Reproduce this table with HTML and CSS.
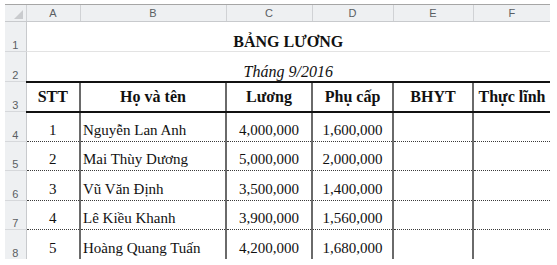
FILE: index.html
```html
<!DOCTYPE html>
<html lang="vi">
<head>
<meta charset="utf-8">
<title>Bảng lương</title>
<link rel="stylesheet" href="styles.css">
</head>
<body>
<table class="sheet">
  <colgroup>
    <col class="c-rh"><col class="c-a"><col class="c-b"><col class="c-c"><col class="c-d"><col class="c-e"><col class="c-f">
  </colgroup>
  <thead>
    <tr class="colhead">
      <th class="corner"><span class="tri"></span></th>
      <th>A</th><th>B</th><th>C</th><th>D</th><th>E</th><th>F</th>
    </tr>
  </thead>
  <tbody>
    <tr class="r r1">
      <th class="rh">1</th>
      <td colspan="6" class="title">BẢNG LƯƠNG</td>
    </tr>
    <tr class="r r2">
      <th class="rh">2</th>
      <td colspan="6" class="sub">Tháng 9/2016</td>
    </tr>
    <tr class="r r3 hdr">
      <th class="rh">3</th>
      <td class="ca">STT</td>
      <td class="cb">Họ và tên</td>
      <td>Lương</td>
      <td>Phụ cấp</td>
      <td>BHYT</td>
      <td>Thực lĩnh</td>
    </tr>
    <tr class="r data">
      <th class="rh">4</th>
      <td class="ca">1</td><td class="cb name">Nguyễn Lan Anh</td><td>4,000,000</td><td>1,600,000</td><td></td><td></td>
    </tr>
    <tr class="r data">
      <th class="rh">5</th>
      <td class="ca">2</td><td class="cb name">Mai Thùy Dương</td><td>5,000,000</td><td>2,000,000</td><td></td><td></td>
    </tr>
    <tr class="r data">
      <th class="rh">6</th>
      <td class="ca">3</td><td class="cb name">Vũ Văn Định</td><td>3,500,000</td><td>1,400,000</td><td></td><td></td>
    </tr>
    <tr class="r data">
      <th class="rh">7</th>
      <td class="ca">4</td><td class="cb name">Lê Kiều Khanh</td><td>3,900,000</td><td>1,560,000</td><td></td><td></td>
    </tr>
    <tr class="r data last">
      <th class="rh">8</th>
      <td class="ca">5</td><td class="cb name">Hoàng Quang Tuấn</td><td>4,200,000</td><td>1,680,000</td><td></td><td></td>
    </tr>
  </tbody>
</table>
</body>
</html>
```
FILE: styles.css
```css
html, body {
  margin: 0;
  padding: 0;
  background: #ffffff;
}
body {
  padding: 4px 0 0 5px;
}
.sheet {
  border-collapse: collapse;
  table-layout: fixed;
  width: 545px;
  font-family: "Liberation Serif", "Times New Roman", serif;
  color: #111;
}
.c-rh { width: 21px; }
.c-a { width: 54px; }
.c-b { width: 146px; }
.c-c { width: 86px; }
.c-d { width: 81px; }
.c-e { width: 80px; }
.c-f { width: 77px; }

.sheet th, .sheet td {
  padding: 0;
  overflow: hidden;
  white-space: nowrap;
}

/* column header row */
.colhead th {
  height: 16px;
  background: #eef0f2;
  border-top: 1px solid #a6a6a6;
  border-bottom: 1px solid #c8cacd;
  border-left: 1px solid #d0d2d5;
  font-family: "Liberation Sans", Arial, sans-serif;
  font-weight: normal;
  font-size: 11px;
  color: #5a5e63;
  text-align: center;
  vertical-align: middle;
}
.colhead .corner {
  border-left: 0;
  position: relative;
}
.tri {
  position: absolute;
  right: 3px;
  bottom: 2px;
  width: 0;
  height: 0;
  border-left: 9px solid transparent;
  border-bottom: 9px solid #c9cbce;
}

/* row header */
.rh {
  background: #eef0f2;
  border-right: 1px solid #c8cacd;
  border-bottom: 1px solid #d6d8db;
  font-family: "Liberation Sans", Arial, sans-serif;
  font-weight: normal;
  font-size: 11px;
  color: #5a5e63;
  text-align: center;
  vertical-align: bottom;
  padding-bottom: 3px;
}

.r1 { height: 30px; }
.r2 { height: 30px; }
.r3 { height: 30px; }
.data { height: 29.6px; }

.title {
  text-align: center;
  vertical-align: bottom;
  font-weight: bold;
  font-size: 16px;
  padding-bottom: 3px;
  padding-left: 2px;
  border-bottom: 1px solid #e3e3e3;
}
.sub {
  text-align: center;
  vertical-align: bottom;
  font-style: italic;
  font-size: 16px;
  padding-bottom: 1px;
  padding-left: 2px;
}

.hdr td {
  border-top: 2px solid #111;
  border-bottom: 2px solid #111;
  border-left: 2px solid #6a6a6a;
  font-weight: bold;
  font-size: 16px;
  text-align: center;
  vertical-align: middle;
}
.hdr td.ca { border-left: 0; }

.data td {
  border-left: 2px solid #6a6a6a;
  border-bottom: 1px dotted #3a3a3a;
  font-size: 15px;
  text-align: center;
  vertical-align: bottom;
  padding-bottom: 2px;
}
.data td.ca { border-left: 0; }
.data td.name {
  text-align: left;
  padding-left: 2px;
}
.data.last td { border-bottom: 0; }
.data.last .rh { border-bottom: 0; }
```
